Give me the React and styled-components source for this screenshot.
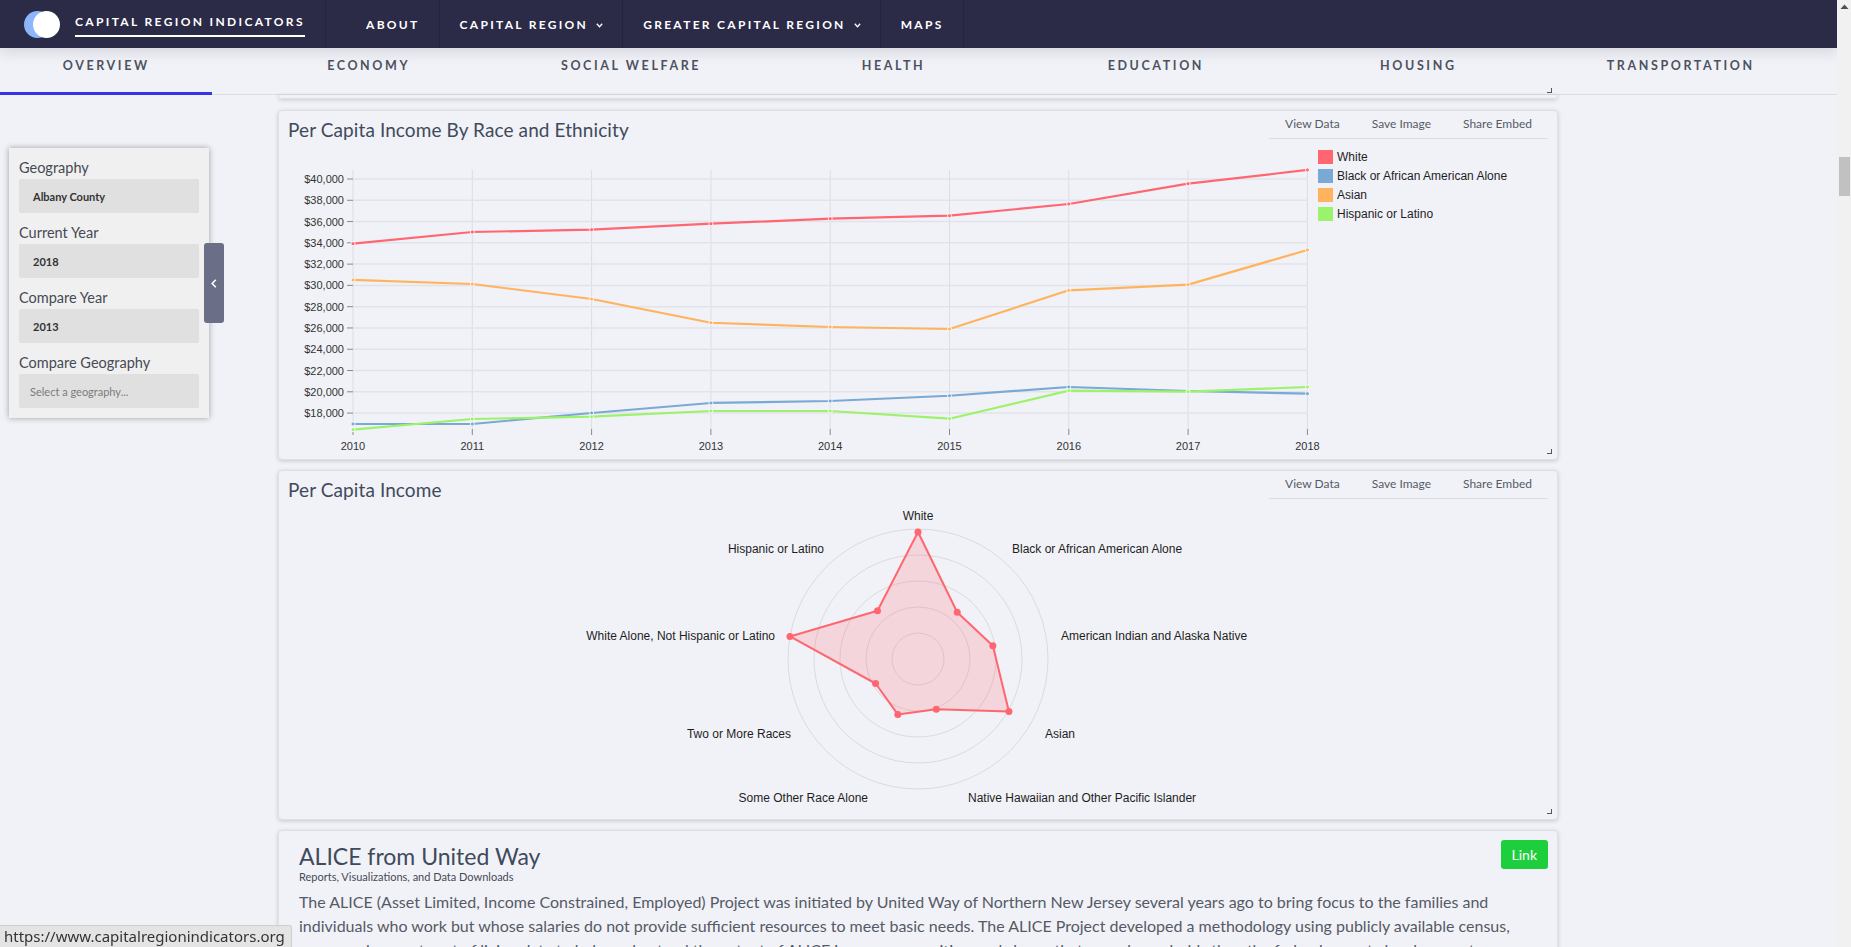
import React from 'react';
import styled, { createGlobalStyle } from 'styled-components';

const GlobalStyle = createGlobalStyle`
  html, body {
    margin: 0;
    padding: 0;
    height: 100%;
    overflow: hidden;
  }
  body {
    background: #f1f2f7;
    font-family: Lato, "Open Sans", sans-serif;
    color: #404a5c;
  }
`;

const NAV_LINKS = [
  { label: 'About' },
  { label: 'Capital Region', menu: true },
  { label: 'Greater Capital Region', menu: true },
  { label: 'Maps' },
];

const TABS = ['Overview', 'Economy', 'Social Welfare', 'Health', 'Education', 'Housing', 'Transportation'];

const FILTERS = [
  { label: 'Geography', value: 'Albany County' },
  { label: 'Current Year', value: '2018' },
  { label: 'Compare Year', value: '2013' },
  { label: 'Compare Geography', placeholder: 'Select a geography...' },
];

const YEARS = [2010, 2011, 2012, 2013, 2014, 2015, 2016, 2017, 2018];

const SERIES = [
  { name: 'White', color: '#ff6670', values: [33920, 35020, 35235, 35800, 36270, 36550, 37650, 39560, 40850] },
  { name: 'Black or African American Alone', color: '#79a9d4', values: [16975, 16975, 18010, 18950, 19135, 19630, 20450, 20075, 19820] },
  { name: 'Asian', color: '#ffb35f', values: [30510, 30130, 28720, 26490, 26090, 25900, 29540, 30070, 33330] },
  { name: 'Hispanic or Latino', color: '#9cf26c', values: [16440, 17445, 17660, 18195, 18195, 17470, 20115, 20010, 20450] },
];

// radar: radius in px of the outer ring is 130
const RADAR = [
  { name: 'White', r: 127, x: 918, y: 519, anchor: 'middle' },
  { name: 'Black or African American Alone', r: 61, x: 1012, y: 552, anchor: 'start' },
  { name: 'American Indian and Alaska Native', r: 76, x: 1061, y: 639, anchor: 'start' },
  { name: 'Asian', r: 105, x: 1045, y: 737, anchor: 'start' },
  { name: 'Native Hawaiian and Other Pacific Islander', r: 53.5, x: 968, y: 801, anchor: 'start' },
  { name: 'Some Other Race Alone', r: 59, x: 868, y: 801, anchor: 'end' },
  { name: 'Two or More Races', r: 49, x: 791, y: 737, anchor: 'end' },
  { name: 'White Alone, Not Hispanic or Latino', r: 130, x: 775, y: 639, anchor: 'end' },
  { name: 'Hispanic or Latino', r: 63, x: 824, y: 552, anchor: 'end' },
];

const xOf = (i) => 353 + i * 119.3;
const yOf = (v) => 178 + (40000 - v) * 0.01064;

function LineChart() {
  const ticks = [];
  for (let v = 18000; v <= 40000; v += 2000) ticks.push(v);

  return (
    <ChartSvg viewBox="279 140 1278 318" width="1278" height="318">
      {YEARS.map((yr, i) => (
        <g key={yr}>
          <line x1={xOf(i)} x2={xOf(i)} y1={169} y2={428} stroke="#dcdce2" strokeWidth="1" />
          <line x1={xOf(i)} x2={xOf(i)} y1={428} y2={434} stroke="#888" strokeWidth="1" />
          <AxisText x={xOf(i)} y={449} textAnchor="middle">{yr}</AxisText>
        </g>
      ))}
      {ticks.map((v) => (
        <g key={v}>
          <line x1={353} x2={1308} y1={yOf(v)} y2={yOf(v)} stroke="#e2e3e9" strokeWidth="1.5" />
          <line x1={347} x2={353} y1={yOf(v)} y2={yOf(v)} stroke="#888" strokeWidth="1" />
          <AxisText x={344} y={yOf(v) + 4} textAnchor="end">${v.toLocaleString('en-US')}</AxisText>
        </g>
      ))}
      {SERIES.map((s) => (
        <g key={s.name}>
          <polyline
            points={s.values.map((v, i) => `${xOf(i)},${yOf(v)}`).join(' ')}
            fill="none"
            stroke={s.color}
            strokeWidth="2.2"
            strokeLinejoin="round"
          />
          {s.values.map((v, i) => (
            <circle key={i} cx={xOf(i)} cy={yOf(v)} r="2" fill={s.color} stroke="#fff" strokeWidth="0.8" />
          ))}
        </g>
      ))}
      {SERIES.map((s, i) => (
        <g key={s.name}>
          <rect x={1318} y={149 + i * 19} width="15" height="14" fill={s.color} />
          <LegendText x={1337} y={160 + i * 19}>{s.name}</LegendText>
        </g>
      ))}
    </ChartSvg>
  );
}

function RadarChart() {
  const cx = 918;
  const cy = 658;
  const pts = RADAR.map((d, i) => {
    const a = (i * 40 * Math.PI) / 180;
    return [cx + d.r * Math.sin(a), cy - d.r * Math.cos(a)];
  });

  return (
    <ChartSvg viewBox="279 500 1278 318" width="1278" height="318">
      {[26, 52, 78, 104, 130].map((r) => (
        <circle key={r} cx={cx} cy={cy} r={r} fill="none" stroke="#dadadf" strokeWidth="1" />
      ))}
      <polygon
        points={pts.map((p) => p.join(',')).join(' ')}
        fill="rgba(255, 102, 112, 0.2)"
        stroke="#ff6670"
        strokeWidth="2"
        strokeLinejoin="round"
      />
      {pts.map((p, i) => (
        <circle key={i} cx={p[0]} cy={p[1]} r="3.5" fill="#ff6670" />
      ))}
      {RADAR.map((d) => (
        <LegendText key={d.name} x={d.x} y={d.y} textAnchor={d.anchor}>{d.name}</LegendText>
      ))}
    </ChartSvg>
  );
}

function ChartCard({ title, children }) {
  return (
    <Card>
      <CardHeader>
        <CardTitle>{title}</CardTitle>
        <CardActions>
          <ActionLink>View Data</ActionLink>
          <ActionLink>Save Image</ActionLink>
          <ActionLink>Share Embed</ActionLink>
        </CardActions>
      </CardHeader>
      {children}
      <ResizeGrip />
    </Card>
  );
}

export default function App() {
  return (
    <>
      <GlobalStyle />
      <PageSC>
        <ViewportSC>
          <TopNavSC>
            <BrandSC>
              <LogoSC>
                <span className="back" />
                <span className="front" />
              </LogoSC>
              <BrandTextSC>Capital Region Indicators</BrandTextSC>
            </BrandSC>
            <NavListSC>
              {NAV_LINKS.map((item) => (
                <NavItemSC key={item.label}>
                  {item.label}
                  {item.menu && (
                    <svg width="7" height="5" viewBox="0 0 7 5">
                      <polyline points="0.8,0.8 3.5,3.8 6.2,0.8" fill="none" stroke="#fff" strokeWidth="1.3" />
                    </svg>
                  )}
                </NavItemSC>
              ))}
            </NavListSC>
          </TopNavSC>

          <TabBarSC>
            {TABS.map((tab, i) => (
              <TabSC key={tab} active={i === 0}>{tab}</TabSC>
            ))}
          </TabBarSC>

          <ContentRowSC>
            <SideColumnSC>
              <FilterPanelSC>
                {FILTERS.map((f) => (
                  <FilterGroupSC key={f.label}>
                    <FilterLabelSC>{f.label}</FilterLabelSC>
                    <FilterInputSC placeholder={!f.value}>{f.value || f.placeholder}</FilterInputSC>
                  </FilterGroupSC>
                ))}
                <PanelToggleSC>
                  <svg width="6" height="9" viewBox="0 0 6 9">
                    <polyline points="4.8,0.8 1.2,4.5 4.8,8.2" fill="none" stroke="#fff" strokeWidth="1.6" />
                  </svg>
                </PanelToggleSC>
              </FilterPanelSC>
            </SideColumnSC>

            <CardColumnSC>
              <CardTailSC>
                <ResizeGrip />
              </CardTailSC>
              <ChartCard title="Per Capita Income By Race and Ethnicity">
                <LineChart />
              </ChartCard>
              <ChartCard title="Per Capita Income">
                <RadarChart />
              </ChartCard>
              <AliceCardSC>
                <AliceHeadSC>
                  <div>
                    <AliceTitleSC>ALICE from United Way</AliceTitleSC>
                    <AliceSubSC>Reports, Visualizations, and Data Downloads</AliceSubSC>
                  </div>
                  <LinkButtonSC>Link</LinkButtonSC>
                </AliceHeadSC>
                <AliceTextSC>
                  The ALICE (Asset Limited, Income Constrained, Employed) Project was initiated by United Way of Northern New Jersey several years ago to bring focus to the families and individuals who work but whose salaries do not provide sufficient resources to meet basic needs. The ALICE Project developed a methodology using publicly available census, wage, and current cost of living data to help understand the extent of ALICE in our communities, and shows that more households than the federal poverty level suggests struggle to afford the basics.
                </AliceTextSC>
              </AliceCardSC>
            </CardColumnSC>
          </ContentRowSC>
        </ViewportSC>

        <ScrollTrackSC>
          <svg width="9" height="6" viewBox="0 0 9 6">
            <polygon points="4.5,0.5 8.5,5 0.5,5" fill="#505050" />
          </svg>
          <ScrollThumbSC />
        </ScrollTrackSC>
      </PageSC>
      <StatusBubbleSC>https://www.capitalregionindicators.org</StatusBubbleSC>
    </>
  );
}

const PageSC = styled.div`
  display: flex;
  height: 100vh;
  overflow: hidden;
`;

const ViewportSC = styled.div`
  flex: 1;
  min-width: 0;
  display: flex;
  flex-direction: column;
  overflow: hidden;
`;

const TopNavSC = styled.nav`
  height: 48px;
  flex-shrink: 0;
  display: flex;
  background: #2b2a47;
  box-shadow: 0 3px 14px rgba(20, 20, 50, 0.14);
  position: relative;
  z-index: 2;
`;

const BrandSC = styled.div`
  width: 326px;
  box-sizing: border-box;
  display: flex;
  align-items: center;
  padding-left: 24px;
  border-right: 1px solid #25243f;
`;

const LogoSC = styled.div`
  position: relative;
  width: 37px;
  height: 27px;
  margin-right: 14px;

  span {
    position: absolute;
    top: 0;
    width: 27px;
    height: 27px;
    border-radius: 50%;
  }

  .back {
    left: 0;
    background: #8cb6f9;
  }

  .front {
    left: 9px;
    background: #ffffff;
  }
`;

const BrandTextSC = styled.div`
  color: #fff;
  font-size: 12px;
  font-weight: 700;
  letter-spacing: 2.35px;
  text-transform: uppercase;
  line-height: 14px;
  padding: 4px 0 6px;
  border-bottom: 2px solid #fff;
  white-space: nowrap;
`;

const NavListSC = styled.div`
  display: flex;
  margin-left: 20px;
`;

const NavItemSC = styled.div`
  display: flex;
  align-items: center;
  gap: 8px;
  padding: 0 19px 0 20px;
  color: #fff;
  font-size: 12px;
  font-weight: 700;
  letter-spacing: 2.3px;
  text-transform: uppercase;
  white-space: nowrap;
  border-right: 1px solid #25243f;

  svg {
    margin-top: 2px;
  }
`;

const TabBarSC = styled.div`
  height: 47px;
  flex-shrink: 0;
  box-sizing: border-box;
  display: flex;
  border-bottom: 1px solid #dcdde5;
  background: #f1f2f7;
`;

const TabSC = styled.div`
  flex: 1;
  position: relative;
  display: flex;
  justify-content: center;
  margin-right: 50px;
  padding-top: 11px;
  font-size: 12.5px;
  font-weight: 700;
  line-height: 14px;
  letter-spacing: 2.6px;
  text-transform: uppercase;
  color: #4d5262;

  &::after {
    content: '';
    display: ${(p) => (p.active ? 'block' : 'none')};
    position: absolute;
    left: 0;
    right: 0;
    bottom: -1px;
    height: 3px;
    background: #3636e6;
  }
`;

const ContentRowSC = styled.div`
  flex: 1;
  display: flex;
  min-height: 0;
`;

const SideColumnSC = styled.aside`
  width: 278px;
  flex-shrink: 0;
  box-sizing: border-box;
  padding: 53px 0 0 9px;
`;

const FilterPanelSC = styled.div`
  position: relative;
  width: 200px;
  box-sizing: border-box;
  padding: 10px;
  background: #f0f0f0;
  box-shadow: 0 0 6px rgba(0, 0, 0, 0.35);
`;

const FilterGroupSC = styled.div`
  & + & {
    margin-top: 10px;
  }
`;

const FilterLabelSC = styled.div`
  font-size: 14.5px;
  line-height: 20px;
  color: #454a55;
  margin-bottom: 1px;
`;

const FilterInputSC = styled.div`
  height: 34px;
  display: flex;
  align-items: center;
  padding-left: ${(p) => (p.placeholder ? '11px' : '14px')};
  background: #e0e0e0;
  border-radius: 2px;
  font-size: 11px;
  font-weight: ${(p) => (p.placeholder ? 400 : 700)};
  color: ${(p) => (p.placeholder ? '#7b7b7b' : '#333')};
`;

const PanelToggleSC = styled.div`
  position: absolute;
  left: 195px;
  top: 95px;
  width: 20px;
  height: 80px;
  border-radius: 3px;
  background: #6a6e86;
  display: flex;
  align-items: center;
  justify-content: center;
`;

const CardColumnSC = styled.main`
  width: 1280px;
  flex-shrink: 0;
`;

const CardTailSC = styled.div`
  position: relative;
  height: 3px;
  margin-bottom: 11px;
  border: 1px solid #dfe0e6;
  border-top: none;
  border-radius: 0 0 4px 4px;
  box-shadow: 0 1px 4px rgba(0, 0, 0, 0.18);
`;

const Card = styled.section`
  position: relative;
  height: 350px;
  box-sizing: border-box;
  margin-bottom: 10px;
  border: 1px solid #dfe0e6;
  border-radius: 4px;
  background: #f1f2f7;
  box-shadow: 0 1px 4px rgba(0, 0, 0, 0.18);
`;

const CardHeader = styled.div`
  height: 30px;
  display: flex;
  justify-content: space-between;
  align-items: flex-start;
`;

const CardTitle = styled.h2`
  margin: 0;
  padding: 7px 0 0 9px;
  font-size: 19px;
  line-height: 24px;
  font-weight: 400;
  letter-spacing: 0.1px;
  color: #404a5c;
`;

const CardActions = styled.div`
  display: flex;
  height: 27px;
  margin-right: 9px;
  border-bottom: 1px solid #dcdde3;
`;

const ActionLink = styled.span`
  padding: 0 16px;
  font-size: 12px;
  line-height: 25px;
  color: #555b66;
`;

const ResizeGrip = styled.span`
  position: absolute;
  right: 5px;
  bottom: 5px;
  width: 4px;
  height: 4px;
  border-right: 1.5px solid #555;
  border-bottom: 1.5px solid #555;
`;

const ChartSvg = styled.svg`
  display: block;
`;

const AxisText = styled.text`
  font-family: "Liberation Sans", Arial, sans-serif;
  font-size: 11px;
  fill: #333;
`;

const LegendText = styled.text`
  font-family: "Liberation Sans", Arial, sans-serif;
  font-size: 12px;
  fill: #1e1e1e;
`;

const AliceCardSC = styled.section`
  border: 1px solid #dfe0e6;
  border-radius: 4px;
  background: #f1f2f7;
  box-shadow: 0 1px 4px rgba(0, 0, 0, 0.18);
  padding: 9px 9px 20px 20px;
`;

const AliceHeadSC = styled.div`
  display: flex;
  justify-content: space-between;
  align-items: flex-start;
`;

const AliceTitleSC = styled.h2`
  margin: 0;
  padding-top: 2px;
  font-size: 23px;
  line-height: 28px;
  font-weight: 400;
  color: #404a5c;
`;

const AliceSubSC = styled.div`
  font-size: 11px;
  line-height: 14px;
  color: #454a55;
`;

const LinkButtonSC = styled.span`
  height: 29px;
  padding: 0 11px;
  border-radius: 3px;
  background: #1dcf3d;
  color: #fff;
  font-size: 14px;
  line-height: 29px;
`;

const AliceTextSC = styled.p`
  margin: 6px 11px 0 0;
  font-size: 16px;
  line-height: 24px;
  color: #555a66;
`;

const ScrollTrackSC = styled.div`
  width: 14px;
  flex-shrink: 0;
  background: #f1f1f1;
  display: flex;
  flex-direction: column;
  align-items: center;
  padding-top: 4px;
  box-sizing: border-box;
`;

const ScrollThumbSC = styled.div`
  width: 11px;
  height: 39px;
  margin-top: 147px;
  background: #c1c1c1;
`;

const StatusBubbleSC = styled.div`
  position: fixed;
  left: 0;
  bottom: 0;
  height: 22px;
  box-sizing: border-box;
  padding: 0 6px 0 4px;
  background: #e4e4e4;
  border: 1px solid #cfcfcf;
  border-left: none;
  border-bottom: none;
  border-radius: 0 3px 0 0;
  font-family: "Noto Sans", "DejaVu Sans", sans-serif;
  font-size: 15px;
  line-height: 21px;
  color: #333;
`;
